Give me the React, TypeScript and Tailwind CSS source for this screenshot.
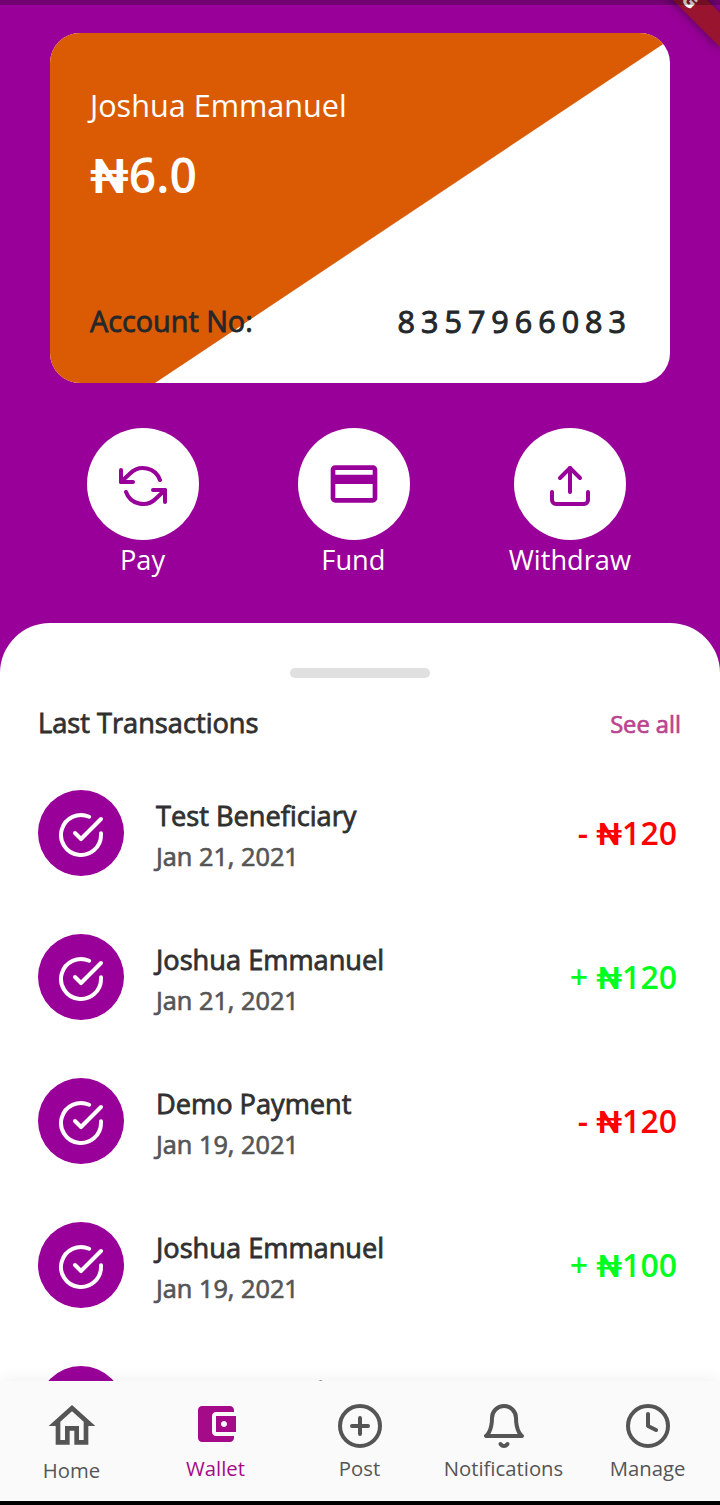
import React from 'react';

interface IconProps {
  className?: string;
}

interface Transaction {
  name: string;
  date: string;
  amount: string;
  credit: boolean;
}

const TRANSACTIONS: Transaction[] = [
  { name: 'Test Beneficiary', date: 'Jan 21, 2021', amount: '120', credit: false },
  { name: 'Joshua Emmanuel', date: 'Jan 21, 2021', amount: '120', credit: true },
  { name: 'Demo Payment', date: 'Jan 19, 2021', amount: '120', credit: false },
  { name: 'Joshua Emmanuel', date: 'Jan 19, 2021', amount: '100', credit: true },
  { name: 'Owner Beneficiary', date: 'Jan 19, 2021', amount: '100', credit: false },
];

// Outline icons share the same 24px grid and 2px round stroke
const StrokeIcon: React.FC<IconProps & { children: React.ReactNode }> = ({ className, children }) => (
  <svg
    viewBox="0 0 24 24"
    fill="none"
    stroke="currentColor"
    strokeWidth="2"
    strokeLinecap="round"
    strokeLinejoin="round"
    className={`size-12 shrink-0 ${className ?? ''}`}
  >
    {children}
  </svg>
);

const FillIcon: React.FC<IconProps & { d: string }> = ({ className, d }) => (
  <svg viewBox="0 0 24 24" fill="currentColor" className={`shrink-0 ${className ?? ''}`}>
    <path d={d} />
  </svg>
);

const RefreshIcon = () => (
  <StrokeIcon className="mt-1">
    <polyline points="1 4 1 10 7 10" />
    <polyline points="23 20 23 14 17 14" />
    <path d="M20.49 9A9 9 0 0 0 5.64 5.64L1 10m22 4l-4.64 4.36A9 9 0 0 1 3.51 15" />
  </StrokeIcon>
);

const CardIcon = () => (
  <FillIcon
    className="size-14"
    d="M20 4H4c-1.11 0-1.99.89-1.99 2L2 18c0 1.11.89 2 2 2h16c1.11 0 2-.89 2-2V6c0-1.11-.89-2-2-2zm0 14H4v-6h16v6zm0-10H4V6h16v2z"
  />
);

const UploadIcon = () => (
  <StrokeIcon className="mt-1">
    <path d="M21 15v4a2 2 0 0 1-2 2H5a2 2 0 0 1-2-2v-4" />
    <polyline points="17 8 12 3 7 8" />
    <line x1="12" y1="3" x2="12" y2="15" />
  </StrokeIcon>
);

const CheckIcon = () => (
  <StrokeIcon className="mt-1">
    <path d="M22 11.08V12a10 10 0 1 1-5.93-9.14" />
    <polyline points="22 4 12 14.01 9 11.01" />
  </StrokeIcon>
);

// The naira sign is set in Roboto, whose bars reach past the stems
const Naira = () => <span className="font-[Roboto,sans-serif]">₦</span>;

const AccountCard: React.FC = () => (
  <div className="relative h-[350px] w-[620px] overflow-hidden rounded-[30px] bg-white">
    <div className="absolute inset-0 bg-[#da5b04] [clip-path:polygon(0_0,620px_0,620px_6.5px,105px_350px,0_350px)]" />
    <div className="relative flex h-full flex-col px-10 pt-[51px]">
      <p className="text-[30.6px] leading-[42px] text-white">Joshua Emmanuel</p>
      <p className="mt-[17px] h-16 text-[48px] leading-[64px] font-semibold text-white">
        <Naira />
        6.0
      </p>
      <div className="-mr-0.5 mt-[93px] flex items-center justify-between text-[#25282b]">
        <span className="text-[28.8px] leading-[42px] [-webkit-text-stroke:0.8px_#25282b]">Account No:</span>
        <span className="text-[30.5px] leading-[42px] tracking-[6px] [-webkit-text-stroke:1px_#25282b]">
          8357966083
        </span>
      </div>
    </div>
  </div>
);

const ActionButton: React.FC<{ label: string; children: React.ReactNode }> = ({ label, children }) => (
  <button className="flex flex-col items-center">
    <span className="flex size-28 items-center justify-center rounded-full bg-white text-[#990099]">
      {children}
    </span>
    <span className="pr-px text-[27.2px] leading-10 text-white">{label}</span>
  </button>
);

const TransactionRow: React.FC<{ transaction: Transaction }> = ({ transaction }) => {
  const { name, date, amount, credit } = transaction;

  return (
    <div className="flex h-[86px] shrink-0 items-center">
      <div className="flex size-[86px] items-center justify-center rounded-full bg-[#990099] text-white">
        <CheckIcon />
      </div>
      <div className="ml-8 pt-[5px]">
        <p className="text-[27.2px] leading-[42px] text-[#303030] [-webkit-text-stroke:0.8px_#303030]">{name}</p>
        <p className="text-[25.3px] leading-[39px] text-[#555555] [-webkit-text-stroke:0.7px_#555555]">{date}</p>
      </div>
      <span
        className={`mr-[5px] ml-auto text-[32px] leading-[44px] font-semibold ${credit ? 'text-[#00ff1e]' : 'text-[#ff0000]'}`}
      >
        {credit ? '+' : '-'} <Naira />
        {amount}
      </span>
    </div>
  );
};

const NavItem: React.FC<{ label: string; active?: boolean; children: React.ReactNode }> = ({
  label,
  active,
  children,
}) => (
  <button className={`flex w-36 flex-col items-center ${active ? 'text-[#a50b88]' : 'text-[#555555]'}`}>
    {children}
    <span className="pr-px text-[20.3px] leading-7">{label}</span>
  </button>
);

const BottomNav: React.FC = () => (
  <nav className="relative flex h-[120px] shrink-0 items-start bg-[#fafafa] shadow-[0_-2px_16px_rgba(0,0,0,0.06)]">
    <NavItem label="Home">
      <FillIcon
        className="mt-[17px] mb-0.5 size-14"
        d="M12 5.69l5 4.5V18h-2v-6H9v6H7v-7.81l5-4.5M12 3L2 12h3v8h6v-6h2v6h6v-8h3L12 3z"
      />
    </NavItem>
    <NavItem label="Wallet" active>
      <FillIcon
        className="mt-[19px] mb-1.5 size-12"
        d="M21 18v1c0 1.1-.9 2-2 2H5c-1.11 0-2-.9-2-2V5c0-1.1.89-2 2-2h14c1.1 0 2 .9 2 2v1h-9c-1.11 0-2 .9-2 2v8c0 1.1.89 2 2 2h9zm-9-2h10V8H12v8zm4-2.5c-.83 0-1.5-.67-1.5-1.5s.67-1.5 1.5-1.5 1.5.67 1.5 1.5-.67 1.5-1.5 1.5z"
      />
    </NavItem>
    <NavItem label="Post">
      <StrokeIcon className="mt-[21px] mb-1">
        <circle cx="12" cy="12" r="10" />
        <line x1="12" y1="8" x2="12" y2="16" />
        <line x1="8" y1="12" x2="16" y2="12" />
      </StrokeIcon>
    </NavItem>
    <NavItem label="Notifications">
      <StrokeIcon className="mt-[21px] mb-1">
        <path d="M18 8A6 6 0 0 0 6 8c0 7-3 9-3 9h18s-3-2-3-9" />
        <path d="M13.73 21a2 2 0 0 1-3.46 0" />
      </StrokeIcon>
    </NavItem>
    <NavItem label="Manage">
      <StrokeIcon className="mt-[21px] mb-1">
        <circle cx="12" cy="12" r="10" />
        <polyline points="12 6 12 12 16 14" />
      </StrokeIcon>
    </NavItem>
  </nav>
);

const App: React.FC = () => {
  return (
    <div className="relative flex h-[1505px] w-[720px] flex-col overflow-hidden bg-[#990099] font-['Open_Sans','Noto_Sans',sans-serif]">
      {/* Balance and actions */}
      <header className="flex h-[623px] shrink-0 flex-col items-center pt-[33px]">
        <AccountCard />
        <div className="mt-[45px] flex w-full justify-between pr-[88px] pl-[87px]">
          <ActionButton label="Pay">
            <RefreshIcon />
          </ActionButton>
          <ActionButton label="Fund">
            <CardIcon />
          </ActionButton>
          <ActionButton label="Withdraw">
            <UploadIcon />
          </ActionButton>
        </div>
      </header>

      {/* Transactions sheet */}
      <main className="flex min-h-0 flex-1 flex-col overflow-hidden rounded-t-[50px] bg-white px-[38px] pt-[45px]">
        <div className="h-2.5 w-[140px] shrink-0 self-center rounded-full bg-[#e0e0e0]" />
        <div className="mt-6 flex h-[42px] shrink-0 items-center justify-between">
          <h2 className="text-[27.2px] text-[#303030] [-webkit-text-stroke:0.8px_#303030]">Last Transactions</h2>
          <a className="mr-px pt-1 text-[23.7px] text-[#ba4490] [-webkit-text-stroke:0.7px_#ba4490]">See all</a>
        </div>
        <div className="mt-[46px] flex flex-col gap-[58px]">
          {TRANSACTIONS.map((transaction, i) => (
            <TransactionRow key={i} transaction={transaction} />
          ))}
        </div>
      </main>

      <BottomNav />
      <div className="h-1 shrink-0 bg-black" />

      {/* Corner ribbon */}
      <div className="absolute -top-[30px] left-[592px] flex h-6 w-40 rotate-45 items-center justify-center bg-[#99142f] font-[Roboto,sans-serif] text-[20.4px] leading-none font-black text-white shadow-[0_0_12px_rgba(0,0,0,0.5)]">
        DEBUG
      </div>
      {/* Status bar scrim */}
      <div className="absolute inset-x-0 top-0 h-[5px] bg-black/25" />
    </div>
  );
};

export default App;
